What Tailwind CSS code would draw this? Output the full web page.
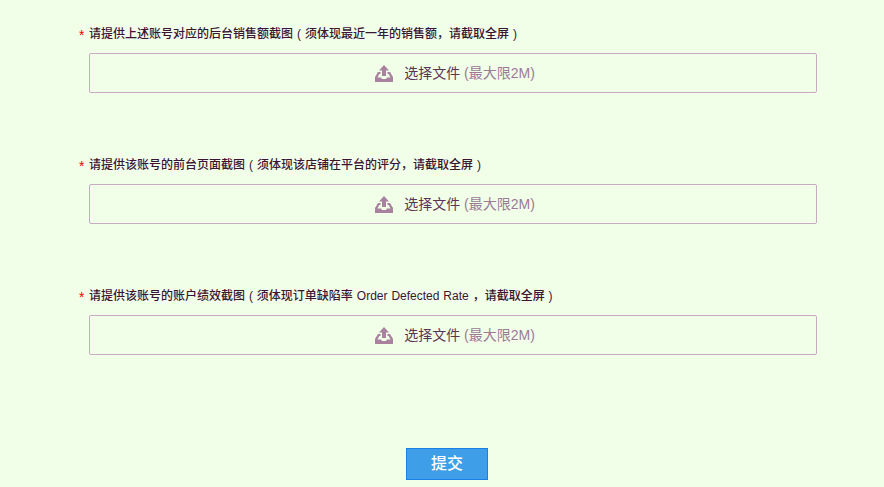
<!DOCTYPE html>
<html lang="zh-CN">
<head>
<meta charset="utf-8">
<script src="https://cdn.jsdelivr.net/npm/@tailwindcss/browser@4"></script>
</head>
<body class="bg-[#f1ffe9] font-['Liberation_Sans','Noto_Sans_CJK_SC',sans-serif] text-[12px] text-[#3a1533] overflow-hidden">
<main class="w-[884px] h-[487px] pt-[27px] flex flex-col overflow-hidden">
  <section class="h-[131px] pl-[79px] pr-[67px]">
    <p class="h-[14px] leading-[14px] flex font-medium"><span class="w-[10px] text-[14px] leading-[16px] text-[#f00000]">*</span><span class="whitespace-pre [word-spacing:0.7px]">请提供上述账号对应的后台销售额截图 ( 须体现最近一年的销售额，请截取全屏 )</span></p>
    <div class="ml-[10px] mt-[12px] h-[40px] pl-[4px] border border-[#c9a9c4] rounded-[2px] flex items-center justify-center text-[14px] text-[#5c3355]">
      <svg class="w-[18px] h-[17px] mr-[11px]" viewBox="0 0 18 17"><path fill="#a9829f" d="M9 0l5 5.500h-3V11H7V5.500H4z"/><path fill="#a9829f" d="M3 7H5.500V9H4.300L2.500 12.500h3.500l1 1.500h4l1-1.500h3.500L13.700 9H12.500V7H15L18 12v5H0v-5z"/></svg>
      <span>选择文件 <span class="text-[#9b7a96]">(最大限2M)</span></span>
    </div>
  </section>
  <section class="h-[131px] pl-[79px] pr-[67px]">
    <p class="h-[14px] leading-[14px] flex font-medium"><span class="w-[10px] text-[14px] leading-[16px] text-[#f00000]">*</span><span class="whitespace-pre [word-spacing:0.7px]">请提供该账号的前台页面截图 ( 须体现该店铺在平台的评分，请截取全屏 )</span></p>
    <div class="ml-[10px] mt-[12px] h-[40px] pl-[4px] border border-[#c9a9c4] rounded-[2px] flex items-center justify-center text-[14px] text-[#5c3355]">
      <svg class="w-[18px] h-[17px] mr-[11px]" viewBox="0 0 18 17"><path fill="#a9829f" d="M9 0l5 5.500h-3V11H7V5.500H4z"/><path fill="#a9829f" d="M3 7H5.500V9H4.300L2.500 12.500h3.500l1 1.500h4l1-1.500h3.500L13.700 9H12.500V7H15L18 12v5H0v-5z"/></svg>
      <span>选择文件 <span class="text-[#9b7a96]">(最大限2M)</span></span>
    </div>
  </section>
  <section class="h-[131px] pl-[79px] pr-[67px]">
    <p class="h-[14px] leading-[14px] flex font-medium"><span class="w-[10px] text-[14px] leading-[16px] text-[#f00000]">*</span><span class="whitespace-pre [word-spacing:0.6px]">请提供该账号的账户绩效截图 ( 须体现订单缺陷率 Order Defected Rate ，请截取全屏 )</span></p>
    <div class="ml-[10px] mt-[12px] h-[40px] pl-[4px] border border-[#c9a9c4] rounded-[2px] flex items-center justify-center text-[14px] text-[#5c3355]">
      <svg class="w-[18px] h-[17px] mr-[11px]" viewBox="0 0 18 17"><path fill="#a9829f" d="M9 0l5 5.500h-3V11H7V5.500H4z"/><path fill="#a9829f" d="M3 7H5.500V9H4.300L2.500 12.500h3.500l1 1.500h4l1-1.500h3.500L13.700 9H12.500V7H15L18 12v5H0v-5z"/></svg>
      <span>选择文件 <span class="text-[#9b7a96]">(最大限2M)</span></span>
    </div>
  </section>
  <div class="flex justify-center mt-[28px] ml-[10px]">
    <button class="w-[82px] h-[32px] bg-[#3e9ee8] border border-[#1a7fe6] text-white text-[16px] font-medium">提交</button>
  </div>
</main>
</body>
</html>
